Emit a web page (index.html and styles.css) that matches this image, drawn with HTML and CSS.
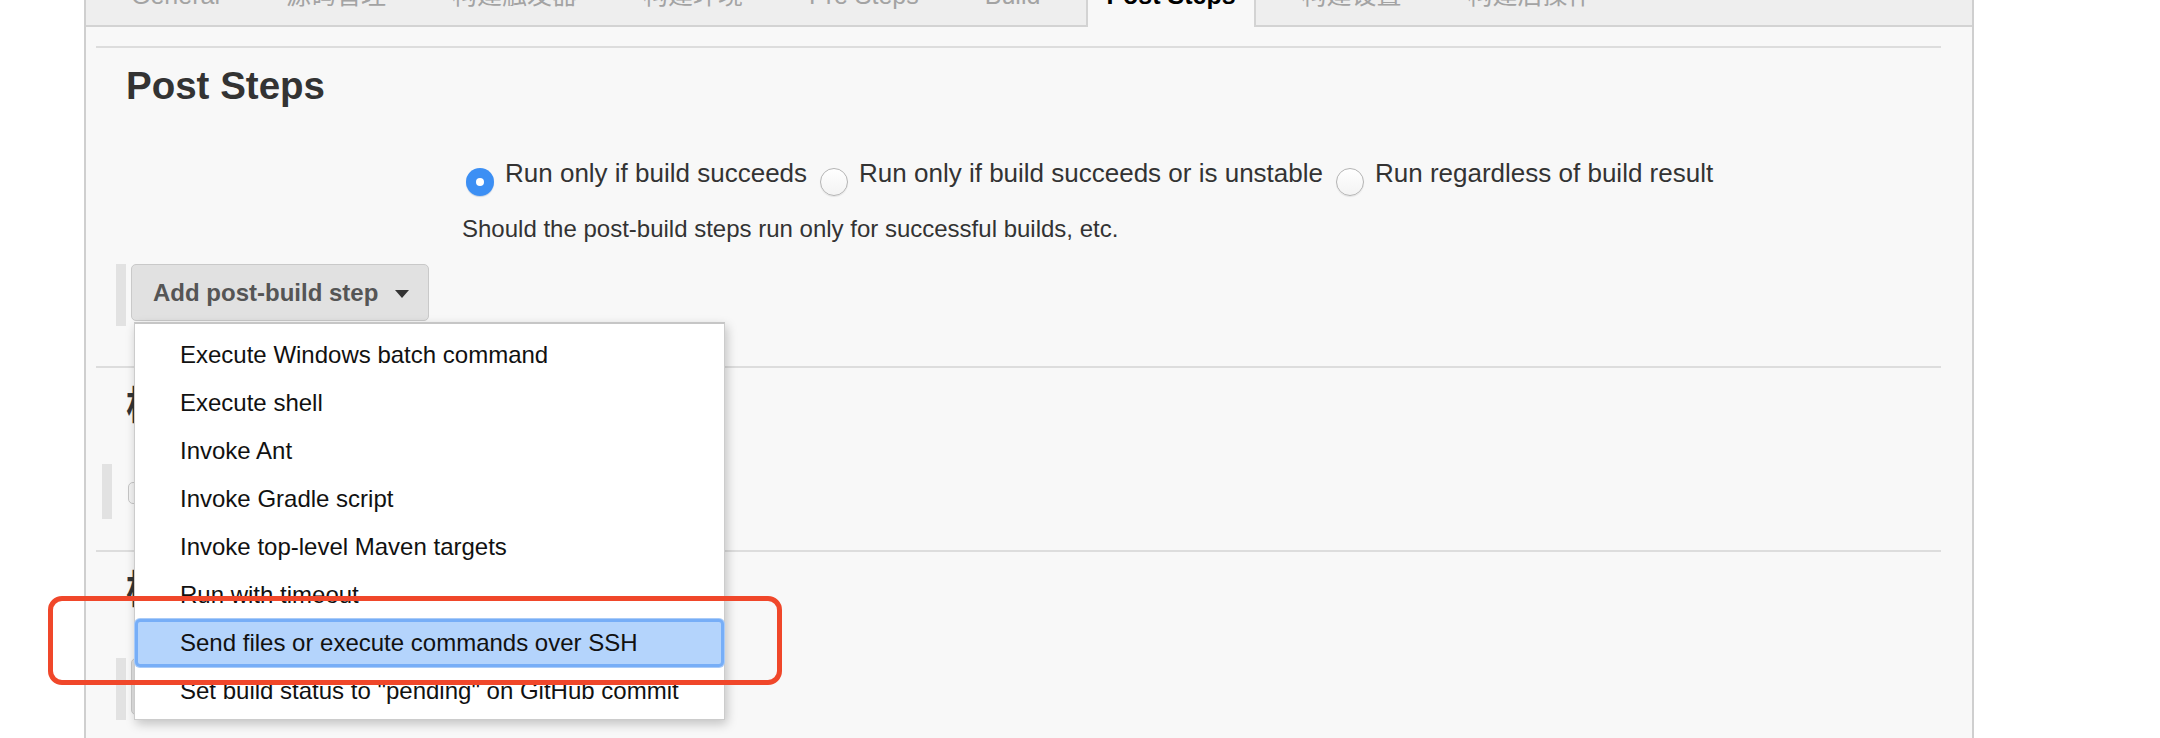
FILE: index.html
```html
<!DOCTYPE html>
<html lang="zh-CN">
<head>
<meta charset="utf-8">
<title>Post Steps</title>
<link rel="stylesheet" href="styles.css">
</head>
<body>
<div class="page">
  <div class="tabbar">
    <div class="tab"><span class="tab-label">General</span></div>
    <div class="tab"><span class="tab-label">源码管理</span></div>
    <div class="tab"><span class="tab-label">构建触发器</span></div>
    <div class="tab"><span class="tab-label">构建环境</span></div>
    <div class="tab"><span class="tab-label">Pre Steps</span></div>
    <div class="tab"><span class="tab-label">Build</span></div>
    <div class="tab active"><span class="tab-label">Post Steps</span></div>
    <div class="tab"><span class="tab-label">构建设置</span></div>
    <div class="tab"><span class="tab-label">构建后操作</span></div>
  </div>

  <div class="section s1">
    <h2 class="sec-title">Post Steps</h2>
    <div class="opts">
      <div class="radios">
        <span class="radio on"></span><span class="rlabel">Run only if build succeeds</span>
        <span class="radio"></span><span class="rlabel">Run only if build succeeds or is unstable</span>
        <span class="radio"></span><span class="rlabel">Run regardless of build result</span>
      </div>
      <div class="desc">Should the post-build steps run only for successful builds, etc.</div>
    </div>
    <div class="btnrow">
      <span class="bar"></span>
      <div class="btnwrap">
        <button class="btn" type="button">Add post-build step<span class="caret"></span></button>
        <ul class="menu">
          <li class="item">Execute Windows batch command</li>
          <li class="item">Execute shell</li>
          <li class="item">Invoke Ant</li>
          <li class="item">Invoke Gradle script</li>
          <li class="item">Invoke top-level Maven targets</li>
          <li class="item">Run with timeout</li>
          <li class="item selected">Send files or execute commands over SSH</li>
          <li class="item">Set build status to "pending" on GitHub commit</li>
        </ul>
      </div>
    </div>
  </div>

  <div class="section s2">
    <h2 class="sec-title">构建设置</h2>
    <div class="row2">
      <span class="bar2"></span>
      <span class="chk"></span>
    </div>
  </div>

  <div class="section s3">
    <h2 class="sec-title">构建后操作</h2>
    <div class="btnrow">
      <span class="bar"></span>
      <button class="btn" type="button">增加构建后操作步骤<span class="caret"></span></button>
    </div>
  </div>
</div>
<div class="annot"></div>
</body>
</html>
```

FILE: styles.css
```css
html, body {
  margin: 0;
  padding: 0;
  height: 738px;
  overflow: hidden;
  background: #ffffff;
}

body {
  font-family: "Liberation Sans", "Noto Sans CJK SC", Arial, sans-serif;
  color: #333333;
  position: relative;
}

.page {
  margin-left: 84px;
  width: 1886px;
  height: 738px;
  box-sizing: content-box;
  border-left: 2px solid #cfcfcf;
  border-right: 2px solid #cfcfcf;
  background: #f8f8f8;
  position: relative;
}

/* tabs */
.tabbar {
  display: flex;
  gap: 26px;
  height: 27px;
  box-sizing: border-box;
  padding-left: 25px;
  background: #eeeeee;
  border-bottom: 2px solid #d3d3d3;
  align-items: stretch;
}

.tab {
  padding: 0 20px;
  font-size: 25px;
  color: #a3a3a3;
  white-space: nowrap;
}

.tab-label {
  display: block;
  line-height: 30px;
  margin-top: -20px;
}

.tab.active {
  padding: 0 18px;
  margin-bottom: -2px;
  background: #f8f8f8;
  border-left: 2px solid #d3d3d3;
  border-right: 2px solid #d3d3d3;
  color: #000000;
  font-weight: bold;
}

/* sections */
.section {
  margin-left: 10px;
  margin-right: 31px;
  border-top: 2px solid #dddddd;
  padding-top: 16px;
}

.s1 {
  margin-top: 19px;
  padding-bottom: 40px;
}

.s2 {
  padding-bottom: 31px;
}

.sec-title {
  margin: 0 0 0 30px;
  font-size: 38.5px;
  line-height: 44px;
  font-weight: bold;
  color: #333333;
  white-space: nowrap;
}

.opts {
  margin-top: 47px;
  margin-left: 366px;
}

.radios {
  display: flex;
  align-items: flex-start;
  height: 36px;
  padding-left: 4px;
}

.radio {
  width: 28px;
  height: 28px;
  margin-top: 13px;
  margin-right: 11px;
  box-sizing: border-box;
  border-radius: 50%;
  border: 1px solid #b4b4b4;
  background: linear-gradient(#ffffff, #f3f3f3);
  box-shadow: 0 1px 1px rgba(0, 0, 0, 0.08);
  flex: none;
  position: relative;
}

.radio.on {
  border: none;
  background: #3c8ff4;
  box-shadow: 0 1px 1px rgba(0, 60, 140, 0.2);
}

.radio.on::after {
  content: "";
  position: absolute;
  left: 10px;
  top: 10px;
  width: 8px;
  height: 8px;
  border-radius: 50%;
  background: #ffffff;
}

.rlabel {
  font-size: 26px;
  line-height: 36px;
  margin-right: 13px;
  white-space: nowrap;
  color: #333333;
}

.desc {
  margin-top: 23px;
  font-size: 24px;
  line-height: 30px;
  color: #333333;
  white-space: nowrap;
}

/* button row */
.btnrow {
  display: flex;
  align-items: flex-start;
  margin-top: 20px;
  margin-left: 20px;
}

.s3 .btnrow {
  margin-top: 46px;
}

.bar {
  width: 10px;
  height: 62px;
  background: #e2e2e2;
  margin-right: 5px;
  flex: none;
}

.btnwrap {
  position: relative;
}

.btn {
  display: flex;
  align-items: center;
  height: 57px;
  box-sizing: border-box;
  padding: 0 19px 0 21px;
  margin: 0;
  border: 1px solid #c9c9c9;
  border-radius: 5px;
  background: #e1e1e1;
  font-family: "Liberation Sans", "Noto Sans CJK SC", Arial, sans-serif;
  font-size: 24px;
  font-weight: bold;
  color: #555555;
  white-space: nowrap;
}

.caret {
  display: inline-block;
  width: 0;
  height: 0;
  margin-left: 17px;
  margin-top: 2px;
  border-left: 7px solid transparent;
  border-right: 7px solid transparent;
  border-top: 8px solid #333333;
}

/* dropdown menu */
.menu {
  position: absolute;
  top: 58px;
  left: 3px;
  width: 591px;
  box-sizing: border-box;
  margin: 0;
  padding: 7px 0 4px 0;
  list-style: none;
  background: #ffffff;
  border: 1px solid #cccccc;
  border-top: 2px solid #c6c6c6;
  box-shadow: 2px 4px 10px rgba(0, 0, 0, 0.22);
  z-index: 10;
}

.item {
  padding-left: 45px;
  font-size: 24px;
  line-height: 48px;
  color: #111111;
  white-space: nowrap;
}

.item.selected {
  background: #b4d4fc;
  border-radius: 5px;
  box-shadow: inset 0 0 0 3px #77aef7, 0 0 0 1px #a9cbf8;
}

/* section 2 details */
.row2 {
  display: flex;
  align-items: flex-start;
  margin-top: 36px;
  margin-left: 6px;
}

.bar2 {
  width: 10px;
  height: 55px;
  background: #e2e2e2;
  flex: none;
}

.chk {
  width: 24px;
  height: 22px;
  margin-top: 18px;
  margin-left: 16px;
  box-sizing: border-box;
  border: 1px solid #c6c6c6;
  border-radius: 5px;
  background: #f3f3f3;
}

/* red annotation */
.annot {
  position: absolute;
  left: 48px;
  top: 596px;
  width: 734px;
  height: 89px;
  box-sizing: border-box;
  border: 5px solid #f0472a;
  border-radius: 14px;
  z-index: 20;
}
```
